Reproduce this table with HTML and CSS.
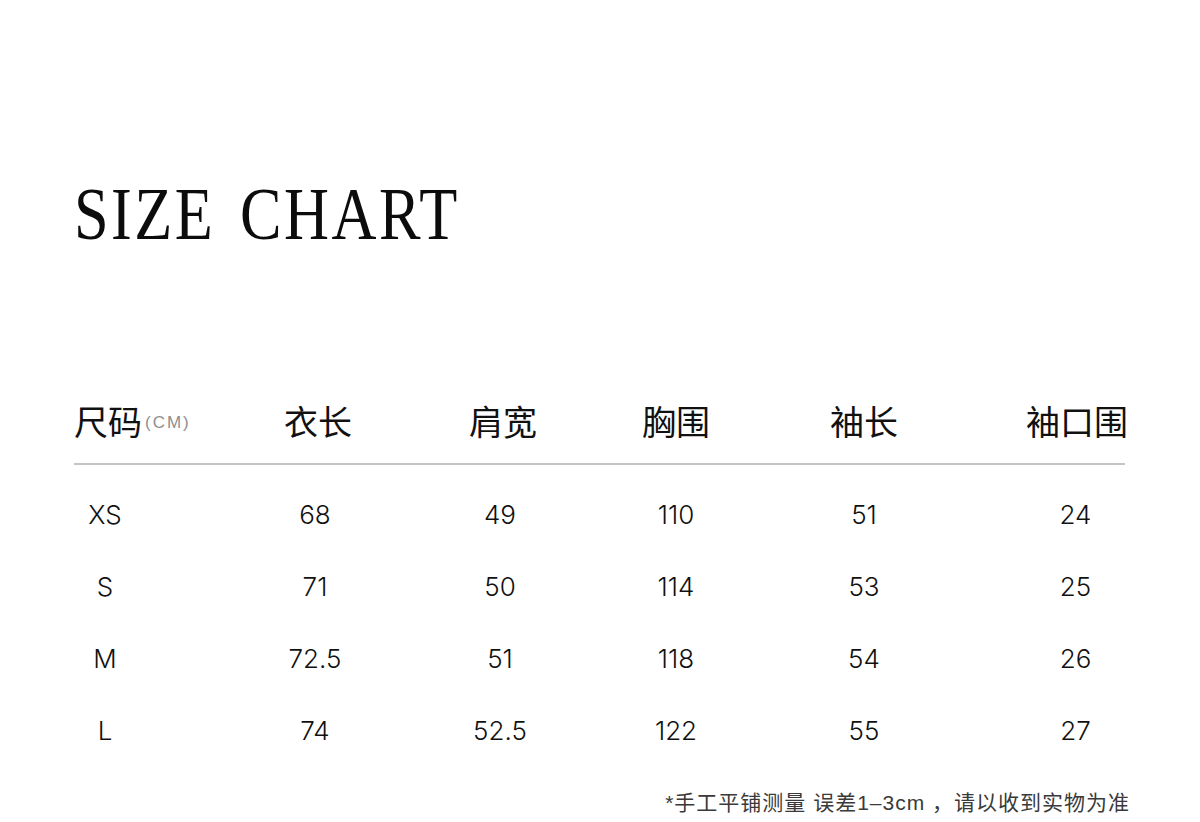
FILE: index.html
```html
<!DOCTYPE html>
<html lang="zh-CN">
<head>
<meta charset="utf-8">
<title>Size Chart</title>
<link rel="stylesheet" href="styles.css">
</head>
<body>
<main class="page">
  <h1 class="title">SIZE CHART</h1>
  <section class="chart">
    <div class="row head">
      <div class="cell first"><span class="zh">尺码</span><span class="unit">(CM)</span></div>
      <div class="cell c2">衣长</div>
      <div class="cell c3">肩宽</div>
      <div class="cell c4">胸围</div>
      <div class="cell c5">袖长</div>
      <div class="cell c6">袖口围</div>
    </div>
    <div class="row data">
      <div class="cell first"><span class="size">XS</span></div>
      <div class="cell c2">68</div>
      <div class="cell c3">49</div>
      <div class="cell c4">110</div>
      <div class="cell c5">51</div>
      <div class="cell c6">24</div>
    </div>
    <div class="row data">
      <div class="cell first"><span class="size">S</span></div>
      <div class="cell c2">71</div>
      <div class="cell c3">50</div>
      <div class="cell c4">114</div>
      <div class="cell c5">53</div>
      <div class="cell c6">25</div>
    </div>
    <div class="row data">
      <div class="cell first"><span class="size">M</span></div>
      <div class="cell c2">72.5</div>
      <div class="cell c3">51</div>
      <div class="cell c4">118</div>
      <div class="cell c5">54</div>
      <div class="cell c6">26</div>
    </div>
    <div class="row data">
      <div class="cell first"><span class="size">L</span></div>
      <div class="cell c2">74</div>
      <div class="cell c3">52.5</div>
      <div class="cell c4">122</div>
      <div class="cell c5">55</div>
      <div class="cell c6">27</div>
    </div>
  </section>
  <p class="note">*手工平铺测量 误差1–3cm ，请以收到实物为准</p>
</main>
</body>
</html>
```
FILE: styles.css
```css
html, body {
  margin: 0;
  padding: 0;
  background: #ffffff;
}

.page {
  width: 1200px;
  height: 822px;
  box-sizing: border-box;
  padding: 176px 75px 0 74px;
  color: #111111;
  font-family: "Liberation Sans", "Noto Sans CJK SC", sans-serif;
}

.title {
  margin: 0;
  font-family: "Liberation Serif", serif;
  font-weight: normal;
  font-size: 75px;
  line-height: 75px;
  letter-spacing: 3px;
  word-spacing: 8px;
  color: #0c0c0c;
  transform: scaleX(0.83);
  transform-origin: 0 0;
  white-space: nowrap;
}

.chart {
  margin-top: 149px;
  width: 1051px;
}

.row {
  display: grid;
  grid-template-columns: 136px 210px 160px 192px 184px 169px;
  align-items: center;
}

.head {
  height: 48px;
  padding-bottom: 15px;
  border-bottom: 2px solid #c4c4c4;
  font-family: "Noto Sans CJK SC", sans-serif;
  font-size: 34px;
  line-height: 42px;
  color: #111111;
  margin-bottom: 13px;
}

.head .cell {
  margin-top: -6px;
}

.head .c2,
.head .c3 {
  padding-left: 6px;
}

.head .c6 {
  padding-left: 70px;
}

.data {
  height: 72px;
  font-family: "Inter", "Liberation Sans", sans-serif;
  font-weight: 300;
  font-size: 26px;
  color: #111111;
}

.cell {
  text-align: center;
  white-space: nowrap;
}

.cell.first {
  text-align: left;
}

.head .first {
  display: flex;
  align-items: center;
}

.unit {
  font-family: "Liberation Sans", sans-serif;
  font-size: 17px;
  letter-spacing: 2px;
  color: #8f8f8f;
  margin-left: 3px;
  margin-top: 3px;
}

.size {
  display: inline-block;
  width: 62px;
  text-align: center;
}

.data .c6 {
  padding-left: 70px;
}

.note {
  margin: 20px 0 0;
  width: 1056px;
  text-align: right;
  font-family: "Liberation Sans", "Noto Sans CJK SC", sans-serif;
  font-size: 21px;
  letter-spacing: 1px;
  color: #3a3a3a;
}
```
